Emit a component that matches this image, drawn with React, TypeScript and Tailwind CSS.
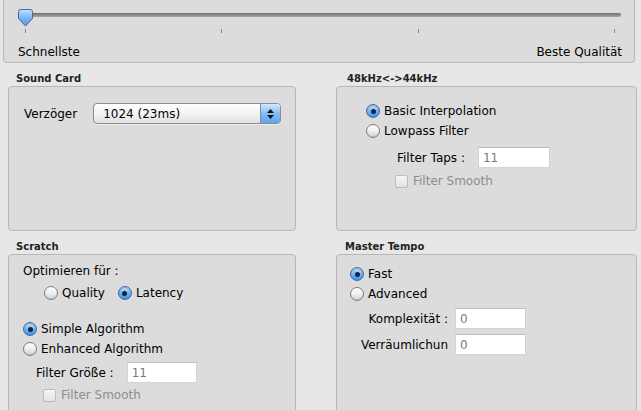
import type { ReactNode } from 'react';

function Radio({ checked }: { checked?: boolean }) {
  if (checked) {
    return (
      <span className="relative flex h-[14px] w-[14px] shrink-0 items-center justify-center rounded-full border border-[#3f6aa6] bg-gradient-to-b from-[#cfe6fd] via-[#75b5f3] to-[#3d8fe9] shadow-[inset_0_1px_1px_rgba(0,0,0,0.25)]">
        <span className="h-[5px] w-[5px] rounded-full bg-[#17223a]" />
      </span>
    );
  }
  return (
    <span className="h-[14px] w-[14px] shrink-0 rounded-full border border-[#7d7d7d] bg-gradient-to-b from-[#fdfdfd] via-[#f0f0f0] to-[#d2d2d2] shadow-[inset_0_-1px_1px_rgba(0,0,0,0.08)]" />
  );
}

function RadioRow({ checked, children }: { checked?: boolean; children: ReactNode }) {
  return (
    <div className="flex h-[20px] items-center gap-[4px]">
      <Radio checked={checked} />
      <span>{children}</span>
    </div>
  );
}

function DisabledCheck({ label }: { label: string }) {
  return (
    <div className="flex h-[20px] items-center gap-[5px] text-[#8c8c8c]">
      <span className="h-[13px] w-[13px] rounded-[2px] border border-[#bcbcbc] bg-gradient-to-b from-[#f6f6f6] to-[#e2e2e2]" />
      <span>{label}</span>
    </div>
  );
}

function Field({ value, width }: { value: string; width: string }) {
  return (
    <div
      className={`flex h-[21px] items-center border border-[#d4d4d4] border-t-[#bdbdbd] bg-white pl-[4px] text-[#7a7a7a] ${width}`}
    >
      {value}
    </div>
  );
}

function GroupTitle({ children, indent }: { children: ReactNode; indent: string }) {
  return (
    <div className={`h-[14px] text-[10px] font-bold leading-[14px] text-[#222] ${indent}`}>
      {children}
    </div>
  );
}

function Box({ children, className }: { children: ReactNode; className?: string }) {
  return (
    <div className={`rounded-[4px] border border-[#b7b7b7] bg-[#dcdcdc] ${className ?? ''}`}>
      {children}
    </div>
  );
}

function QualitySlider() {
  return (
    <div className="ml-[3px] h-[63px] w-[632px] rounded-b-[4px] border-x border-b border-[#b7b7b7] bg-[#dcdcdc] pt-[13px]">
      {/* track + knob */}
      <div className="relative ml-[21px] mr-[13px] h-[4px] rounded-full bg-gradient-to-b from-[#6d6d6d] to-[#a9a9a9]">
        <svg
          className="absolute left-[-7px] top-[-4px]"
          width="15"
          height="18"
          viewBox="0 0 15 18"
        >
          <defs>
            <linearGradient id="knob" x1="0" y1="0" x2="0" y2="1">
              <stop offset="0" stopColor="#c4def9" />
              <stop offset="0.5" stopColor="#7fb6f2" />
              <stop offset="1" stopColor="#4d95ea" />
            </linearGradient>
          </defs>
          <path
            d="M2.5 0.5 H12.5 Q14.5 0.5 14.5 2.5 V9.5 L7.5 17 L0.5 9.5 V2.5 Q0.5 0.5 2.5 0.5 Z"
            fill="url(#knob)"
            stroke="#45679b"
            strokeWidth="1"
          />
        </svg>
      </div>
      {/* ticks */}
      <div className="ml-[21px] mr-[19px] mt-[12px] flex h-[4px] justify-between">
        <span className="w-px bg-[#8a8a8a]" />
        <span className="w-px bg-[#8a8a8a]" />
        <span className="w-px bg-[#8a8a8a]" />
        <span className="w-px bg-[#8a8a8a]" />
      </div>
      <div className="mt-[12px] flex h-[14px] items-center justify-between pl-[14px] pr-[12px] leading-[14px]">
        <span>Schnellste</span>
        <span>Beste Qualität</span>
      </div>
    </div>
  );
}

function PopupButton() {
  return (
    <div className="flex h-[21px] w-[188px] overflow-hidden rounded-[4px] border border-[#8c8c8c] bg-gradient-to-b from-white via-[#f3f3f3] to-[#e2e2e2] shadow-[0_1px_0_rgba(255,255,255,0.5)]">
      <span className="flex flex-1 items-center pl-[9px]">1024 (23ms)</span>
      <span className="flex w-[20px] flex-col items-center justify-center gap-[2px] border-l border-[#6f8fc0] bg-gradient-to-b from-[#d3e8fd] via-[#82bdf5] to-[#5aa6f0]">
        <svg width="7" height="4" viewBox="0 0 7 4">
          <path d="M3.5 0 L7 4 H0 Z" fill="#111" />
        </svg>
        <svg width="7" height="4" viewBox="0 0 7 4">
          <path d="M0 0 H7 L3.5 4 Z" fill="#111" />
        </svg>
      </span>
    </div>
  );
}

export default function App() {
  return (
    <div className="h-[410px] w-[641px] overflow-hidden bg-[#e7e7e7] font-['DejaVu_Sans',sans-serif] text-[12px] text-black">
      <QualitySlider />

      <div className="ml-[8px] mt-[9px] grid grid-cols-[288px_301px] gap-x-[40px]">
        {/* row 1 */}
        <div>
          <GroupTitle indent="pl-[8px]">Sound Card</GroupTitle>
          <Box className="h-[145px] pl-[15px] pt-[16px]">
            <div className="flex items-center gap-[16px]">
              <span>Verzöger</span>
              <PopupButton />
            </div>
          </Box>
        </div>
        <div>
          <GroupTitle indent="pl-[11px]">48kHz&lt;-&gt;44kHz</GroupTitle>
          <Box className="h-[145px] pl-[29px] pt-[14px]">
            <RadioRow checked>Basic Interpolation</RadioRow>
            <RadioRow>Lowpass Filter</RadioRow>
            <div className="ml-[31px] mt-[6px] flex items-center gap-[13px]">
              <span>Filter Taps :</span>
              <Field value="11" width="w-[72px]" />
            </div>
            <div className="ml-[29px] mt-[3px]">
              <DisabledCheck label="Filter Smooth" />
            </div>
          </Box>
        </div>

        {/* row 2 */}
        <div className="mt-[9px]">
          <GroupTitle indent="pl-[8px]">Scratch</GroupTitle>
          <Box className="h-[170px] pl-[14px] pt-[6px]">
            <div className="flex h-[20px] items-center">Optimieren für :</div>
            <div className="ml-[21px] mt-[2px] flex gap-[13px]">
              <RadioRow>Quality</RadioRow>
              <RadioRow checked>Latency</RadioRow>
            </div>
            <div className="mt-[16px]">
              <RadioRow checked>Simple Algorithm</RadioRow>
              <RadioRow>Enhanced Algorithm</RadioRow>
            </div>
            <div className="ml-[13px] mt-[3px] flex items-center gap-[13px]">
              <span>Filter Größe :</span>
              <Field value="11" width="w-[70px]" />
            </div>
            <div className="ml-[20px] mt-[2px]">
              <DisabledCheck label="Filter Smooth" />
            </div>
          </Box>
        </div>
        <div className="mt-[9px]">
          <GroupTitle indent="pl-[9px]">Master Tempo</GroupTitle>
          <Box className="h-[170px] pl-[13px] pt-[9px]">
            <RadioRow checked>Fast</RadioRow>
            <RadioRow>Advanced</RadioRow>
            <div className="-ml-[13px] mt-[4px] grid grid-cols-[111px_71px] items-center gap-x-[7px] gap-y-[5px]">
              <span className="text-right">Komplexität :</span>
              <Field value="0" width="w-[71px]" />
              <span className="text-right">Verräumlichun</span>
              <Field value="0" width="w-[71px]" />
            </div>
          </Box>
        </div>
      </div>
    </div>
  );
}
